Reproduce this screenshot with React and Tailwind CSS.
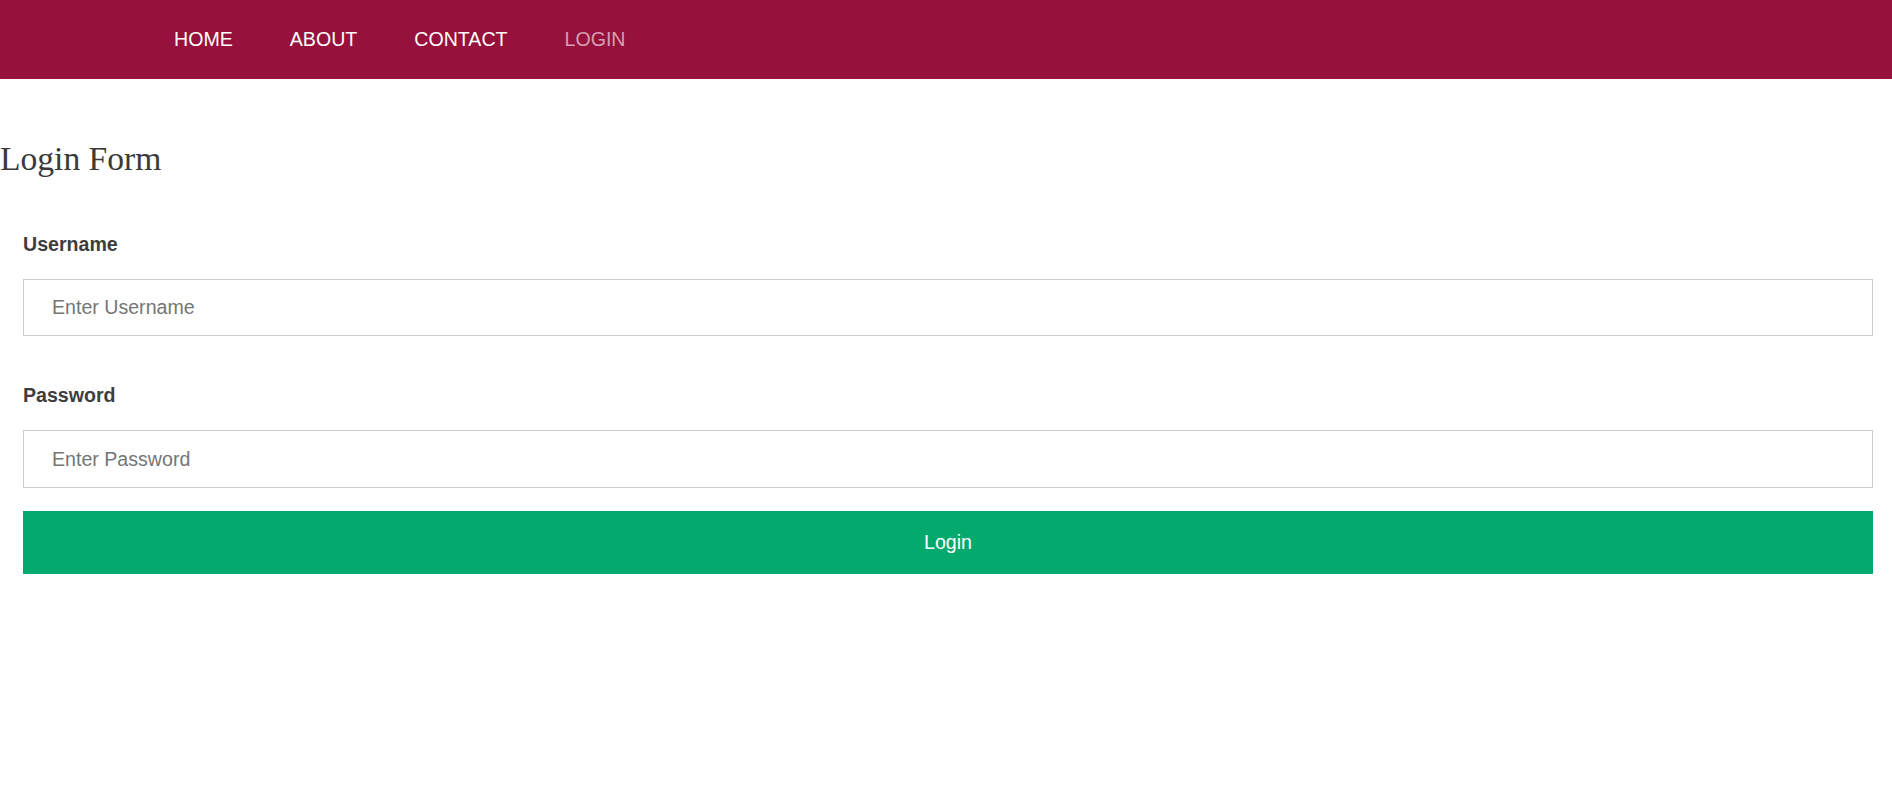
import React, { useState } from "react";

export default function App() {
  const [username, setUsername] = useState("");
  const [password, setPassword] = useState("");

  const links = ["HOME", "ABOUT", "CONTACT", "LOGIN"];

  return (
    <div className="min-h-screen bg-white font-['Liberation_Sans',Arial,sans-serif]">
      <nav className="h-[79px] bg-[#96113b] flex items-center pl-[145.5px] pb-[1px]">
        {links.map((l) => (
          <a
            key={l}
            href="#"
            className={
              "px-[28.5px] text-[19.6px] leading-[22px] " +
              (l === "LOGIN" ? "text-[#d79fb2]" : "text-white")
            }
          >
            {l}
          </a>
        ))}
      </nav>

      <h2 className="mt-[61px] text-[33.6px] leading-[38px] text-[#3a3a3a] font-['Liberation_Serif',Georgia,serif]">
        Login Form
      </h2>

      <form onSubmit={(e) => e.preventDefault()} className="px-[23px] pr-[19px] mt-[55px]">
        <label className="block text-[19.6px] leading-[22px] font-bold text-[#3d3d3d]">
          Username
        </label>
        <input
          type="text"
          placeholder="Enter Username"
          value={username}
          onChange={(e) => setUsername(e.target.value)}
          className="mt-[24px] block w-full h-[57px] border border-[#cccccc] px-[28px] text-[19.6px] text-[#333] placeholder:text-[#757575] outline-none"
        />

        <label className="mt-[48px] block text-[19.6px] leading-[22px] font-bold text-[#3d3d3d]">
          Password
        </label>
        <input
          type="password"
          placeholder="Enter Password"
          value={password}
          onChange={(e) => setPassword(e.target.value)}
          className="mt-[24px] block w-full h-[58px] border border-[#cccccc] px-[28px] text-[19.6px] text-[#333] placeholder:text-[#757575] outline-none"
        />

        <button
          type="submit"
          className="mt-[23px] block w-full h-[63px] bg-[#04a96d] text-white text-[19.6px]"
        >
          Login
        </button>
      </form>
    </div>
  );
}
